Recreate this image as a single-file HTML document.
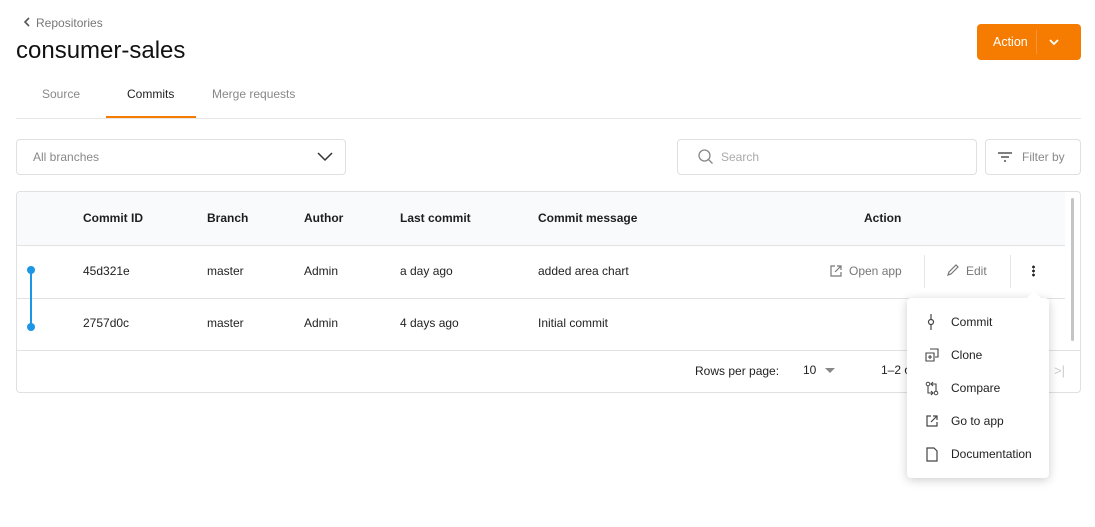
<!DOCTYPE html>
<html><head><meta charset="utf-8"><style>
*{box-sizing:border-box;margin:0;padding:0}
body{width:1095px;height:527px;background:#fff;font-family:"Liberation Sans",Arial,sans-serif;position:relative;overflow:hidden;color:#222}
.a{position:absolute}
.t{font-size:12px;color:#222;white-space:nowrap}
.h{font-size:12px;font-weight:bold;color:#1e1e1e;white-space:nowrap}
.mi{position:absolute;left:20px;font-size:12px;color:#222}
.ic{position:absolute;left:18px}
</style></head><body>
<div class="a" style="left:22px;top:16px;font-size:12px;color:#777"><svg width="10" height="12" style="vertical-align:-1px;margin-right:4px"><path d="M7 2L3 6l4 4" stroke="#555" stroke-width="1.6" fill="none"/></svg>Repositories</div>
<div class="a" style="left:16px;top:37px;font-size:24px;color:#111">consumer-sales</div>
<div class="a" style="left:977px;top:24px;width:104px;height:36px;background:#f57c00;border-radius:4px"></div>
<div class="a" style="left:993px;top:35px;font-size:12.5px;color:#fff">Action</div>
<div class="a" style="left:1036px;top:30px;width:1px;height:24px;background:#f8953a"></div>
<svg class="a" style="left:1048px;top:37px" width="12" height="10"><path d="M2 3l4 4 4-4" stroke="#fff" stroke-width="1.8" fill="none"/></svg>
<div class="a" style="left:42px;top:87px;font-size:12px;color:#888">Source</div>
<div class="a" style="left:127px;top:87px;font-size:12px;color:#222">Commits</div>
<div class="a" style="left:212px;top:87px;font-size:12px;color:#888">Merge requests</div>
<div class="a" style="left:16px;top:118px;width:1065px;height:1px;background:#e6e6e6"></div>
<div class="a" style="left:106px;top:116px;width:90px;height:2px;background:#f57c00"></div>
<div class="a" style="left:16px;top:139px;width:330px;height:36px;border:1px solid #e0e0e0;border-radius:4px"></div>
<div class="a" style="left:33px;top:150px;font-size:12px;color:#888">All branches</div>
<svg class="a" style="left:316px;top:150px" width="18" height="12"><path d="M2 3l7 7 7-7" stroke="#333" stroke-width="1.5" fill="none"/></svg>
<div class="a" style="left:677px;top:139px;width:300px;height:36px;border:1px solid #e0e0e0;border-radius:4px"></div>
<svg class="a" style="left:697px;top:148px" width="18" height="18"><circle cx="7.5" cy="7.5" r="5.5" stroke="#888" stroke-width="1.3" fill="none"/><path d="M11.5 11.5l4 4" stroke="#888" stroke-width="1.3"/></svg>
<div class="a" style="left:721px;top:150px;font-size:12px;color:#aaa">Search</div>
<div class="a" style="left:985px;top:139px;width:96px;height:36px;border:1px solid #e0e0e0;border-radius:4px"></div>
<svg class="a" style="left:997px;top:150px" width="16" height="14"><path d="M1 3h14M4 7h8M7 11h2" stroke="#555" stroke-width="1.5"/></svg>
<div class="a" style="left:1022px;top:150px;font-size:12px;color:#888">Filter by</div>
<div class="a" style="left:16px;top:191px;width:1065px;height:202px;border:1px solid #e0e0e0;border-radius:4px;overflow:hidden">
 <div class="a" style="left:0;top:0;width:1048px;height:54px;background:#f9fafc;border-bottom:1px solid #e2e2e2"></div>
 <div class="a" style="left:0;top:106px;width:1048px;height:1px;background:#e2e2e2"></div>
 <div class="a" style="left:0;top:158px;width:1063px;height:1px;background:#e2e2e2"></div>
 <div class="a" style="left:1054px;top:6px;width:3px;height:143px;background:#c4c4c4;border-radius:2px"></div>
</div>
<div class="a h" style="left:83px;top:211px">Commit ID</div>
<div class="a h" style="left:207px;top:211px">Branch</div>
<div class="a h" style="left:304px;top:211px">Author</div>
<div class="a h" style="left:400px;top:211px">Last commit</div>
<div class="a h" style="left:538px;top:211px">Commit message</div>
<div class="a h" style="left:864px;top:211px">Action</div>
<div class="a" style="left:30px;top:270px;width:2px;height:57px;background:#1e96e6"></div>
<div class="a" style="left:27px;top:266px;width:8px;height:8px;border-radius:50%;background:#1e96e6"></div>
<div class="a" style="left:27px;top:323px;width:8px;height:8px;border-radius:50%;background:#1e96e6"></div>
<div class="a t" style="left:83px;top:264px">45d321e</div>
<div class="a t" style="left:207px;top:264px">master</div>
<div class="a t" style="left:304px;top:264px">Admin</div>
<div class="a t" style="left:400px;top:264px">a day ago</div>
<div class="a t" style="left:538px;top:264px">added area chart</div>
<div class="a t" style="left:83px;top:316px">2757d0c</div>
<div class="a t" style="left:207px;top:316px">master</div>
<div class="a t" style="left:304px;top:316px">Admin</div>
<div class="a t" style="left:400px;top:316px">4 days ago</div>
<div class="a t" style="left:538px;top:316px">Initial commit</div>
<svg class="a" style="left:829px;top:264px" width="14" height="14"><path d="M6 2H2v10h10V8M8 2h4v4M12 2L6 8" stroke="#777" stroke-width="1.2" fill="none"/></svg>
<div class="a t" style="left:849px;top:264px;color:#777">Open app</div>
<div class="a" style="left:924px;top:255px;width:1px;height:33px;background:#e6e6e6"></div>
<svg class="a" style="left:945px;top:263px" width="15" height="15"><path d="M3 12l1-3 7-7 2 2-7 7z" stroke="#777" stroke-width="1.2" fill="none"/></svg>
<div class="a t" style="left:966px;top:264px;color:#777">Edit</div>
<div class="a" style="left:1010px;top:255px;width:1px;height:33px;background:#e6e6e6"></div>
<div class="a" style="left:1032px;top:265px;width:3px;height:12px;background:radial-gradient(circle,#222 1.3px,transparent 1.5px) 0 0/3px 4px"></div>
<div class="a t" style="left:695px;top:364px">Rows per page:</div>
<div class="a t" style="left:803px;top:363px">10</div>
<svg class="a" style="left:825px;top:368px" width="10" height="6"><path d="M0 0h10L5 5z" fill="#888"/></svg>
<div class="a t" style="left:881px;top:363px">1–2 of 2</div>
<div class="a" style="left:1054px;top:363px;font-size:13px;color:#ccc">&gt;|</div>
<div class="a" style="left:907px;top:298px;width:142px;height:180px;background:#fff;border-radius:4px;box-shadow:0 2px 10px rgba(0,0,0,.2)">
 <div class="a" style="left:122px;top:-5px;width:10px;height:10px;background:#fff;transform:rotate(45deg)"></div>
 <svg class="ic" style="top:16px" width="12" height="16"><path d="M6 0v16" stroke="#444" stroke-width="1.2"/><circle cx="6" cy="8" r="2.5" fill="#fff" stroke="#444" stroke-width="1.2"/></svg><div class="mi" style="left:44px;top:17px">Commit</div>
 <svg class="ic" style="top:50px" width="14" height="14"><path d="M5 1h8v8h-3M1 5h8v8H1z M5 7v4M3 9h4" stroke="#444" stroke-width="1.1" fill="none"/></svg><div class="mi" style="left:44px;top:50px">Clone</div>
 <svg class="ic" style="top:83px" width="14" height="15"><circle cx="3" cy="3" r="1.8" stroke="#444" fill="none"/><circle cx="11" cy="12" r="1.8" stroke="#444" fill="none"/><path d="M3 5v7h5M11 10V3H6M8 1L6 3l2 2M6 10l2 2-2 2" stroke="#444" stroke-width="1.1" fill="none"/></svg><div class="mi" style="left:44px;top:83px">Compare</div>
 <svg class="ic" style="top:116px" width="14" height="14"><path d="M6 2H2v10h10V8M8 2h4v4M12 2L6 8" stroke="#444" stroke-width="1.2" fill="none"/></svg><div class="mi" style="left:44px;top:116px">Go to app</div>
 <svg class="ic" style="top:149px" width="14" height="15"><path d="M2 1h7l3 3v10H2z" stroke="#444" stroke-width="1.2" fill="none"/></svg><div class="mi" style="left:44px;top:149px">Documentation</div>
</div>
</body></html>
